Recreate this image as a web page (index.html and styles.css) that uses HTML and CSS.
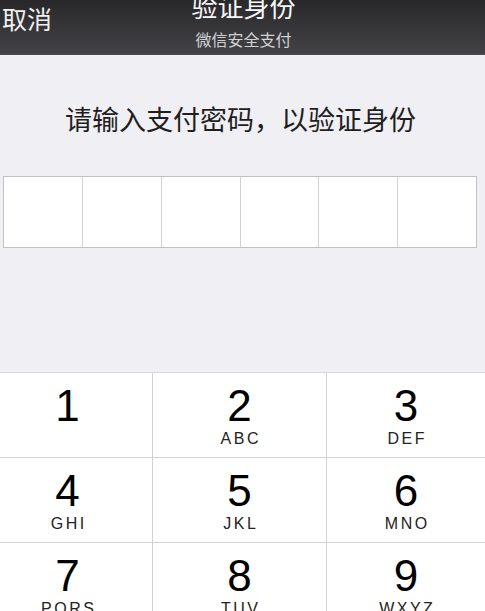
FILE: index.html
```html
<!DOCTYPE html>
<html lang="zh">
<head>
<meta charset="utf-8">
<title>验证身份</title>
<link rel="stylesheet" href="styles.css">
</head>
<body>
<div class="page">
  <header class="nav">
    <div class="cancel">取消</div>
    <div class="titles">
      <div class="title">验证身份</div>
      <div class="subtitle">微信安全支付</div>
    </div>
    <div class="spacer"></div>
  </header>
  <main class="content">
    <p class="prompt">请输入支付密码，以验证身份</p>
    <div class="pin">
      <div class="cell"></div>
      <div class="cell"></div>
      <div class="cell"></div>
      <div class="cell"></div>
      <div class="cell"></div>
      <div class="cell"></div>
    </div>
  </main>
  <section class="keypad">
    <div class="key key-left"><span class="digit">1</span><span class="letters"></span></div>
    <div class="key"><span class="digit">2</span><span class="letters">ABC</span></div>
    <div class="key"><span class="digit">3</span><span class="letters">DEF</span></div>
    <div class="key key-left"><span class="digit">4</span><span class="letters">GHI</span></div>
    <div class="key"><span class="digit">5</span><span class="letters">JKL</span></div>
    <div class="key"><span class="digit">6</span><span class="letters">MNO</span></div>
    <div class="key key-left"><span class="digit">7</span><span class="letters">PQRS</span></div>
    <div class="key"><span class="digit">8</span><span class="letters">TUV</span></div>
    <div class="key"><span class="digit">9</span><span class="letters">WXYZ</span></div>
  </section>
</div>
</body>
</html>
```

FILE: styles.css
```css
* { box-sizing: border-box; }
html, body {
  margin: 0;
  padding: 0;
  height: 611px;
  overflow: hidden;
  background: #efeff4;
  font-family: "Liberation Sans", "Noto Sans CJK SC", sans-serif;
}
.page {
  display: flex;
  flex-direction: column;
  height: 611px;
}
.nav {
  height: 55px;
  flex: none;
  display: grid;
  grid-template-columns: 1fr auto 1fr;
  background: linear-gradient(#28282a, #434347);
  border-bottom: 1px solid #4c4c50;
  color: #f2f2f2;
  font-family: "Noto Sans CJK SC", sans-serif;
  overflow: hidden;
}
.cancel {
  font-size: 25px;
  line-height: 25px;
  padding: 6px 0 0 2px;
  color: #f0f0f0;
}
.titles {
  display: flex;
  flex-direction: column;
  align-items: center;
  padding-left: 2px;
}
.title {
  font-size: 26px;
  line-height: 26px;
  margin-top: -7px;
  color: #f6f6f6;
}
.subtitle {
  font-size: 16px;
  line-height: 16px;
  margin-top: 12px;
  color: #d2d2d5;
}
.content {
  flex: 1;
  display: flex;
  flex-direction: column;
  align-items: flex-start;
}
.prompt {
  align-self: stretch;
  margin: 50px 0 0 0;
  font-family: "Noto Sans CJK SC", sans-serif;
  font-size: 27px;
  line-height: 27px;
  text-align: center;
  color: #1e1e1e;
  padding-right: 4px;
}
.pin {
  margin: 44px 0 0 3px;
  width: 474px;
  height: 72px;
  display: grid;
  grid-template-columns: repeat(6, 1fr);
  gap: 1px;
  background: #d0d0d6;
  border: 1px solid #c0c0c6;
}
.cell {
  background: #ffffff;
}
.keypad {
  flex: none;
  height: 239px;
  display: grid;
  grid-template-columns: 152px 173px 1fr;
  grid-auto-rows: 84px;
  gap: 1px;
  background: #d2d2d6;
  border-top: 1px solid #d8d8dc;
}
.key {
  background: #ffffff;
  display: flex;
  flex-direction: column;
  align-items: center;
  padding-top: 11px;
}
.key-left {
  padding-right: 17px;
}
.digit {
  font-size: 44px;
  line-height: 44px;
  color: #000;
}
.letters {
  margin-top: 3px;
  font-size: 16px;
  line-height: 16px;
  letter-spacing: 2.5px;
  padding-left: 2.5px;
  color: #222;
}
```
